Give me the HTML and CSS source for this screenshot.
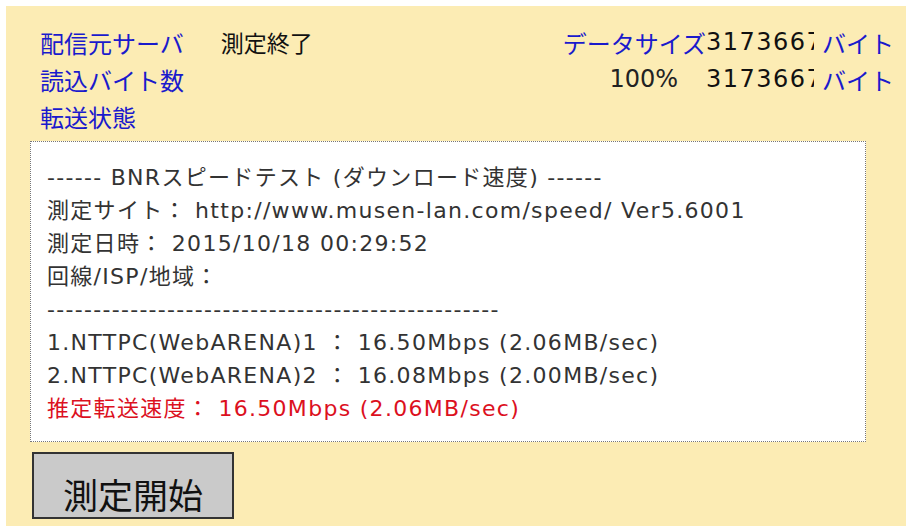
FILE: index.html
```html
<!DOCTYPE html>
<html lang="ja">
<head>
    <meta charset="UTF-8" />
    <meta name="viewport" content="width=device-width, initial-scale=1.0"/>
    <title>BNRスピードテスト</title>
    <link rel="stylesheet" href="styles.css">
</head>
<body>
    <div class="panel">
        <div class="info">
            <div class="info-row">
                <span class="label">配信元サーバ</span>
                <span class="status">測定終了</span>
                <div class="size">
                    <span class="label">データサイズ</span>
                    <span class="num">3173667</span>
                    <span class="label unit">バイト</span>
                </div>
            </div>
            <div class="info-row">
                <span class="label">読込バイト数</span>
                <div class="size">
                    <span class="pct">100%</span>
                    <span class="num">3173667</span>
                    <span class="label unit">バイト</span>
                </div>
            </div>
            <div class="info-row">
                <span class="label">転送状態</span>
            </div>
        </div>

        <div class="result">
            <p>------ BNRスピードテスト (ダウンロード速度) ------</p>
            <p>測定サイト： http://www.musen-lan.com/speed/ Ver5.6001</p>
            <p>測定日時： 2015/10/18 00:29:52</p>
            <p>回線/ISP/地域：</p>
            <p>-------------------------------------------------</p>
            <p>1.NTTPC(WebARENA)1 ： 16.50Mbps (2.06MB/sec)</p>
            <p>2.NTTPC(WebARENA)2 ： 16.08Mbps (2.00MB/sec)</p>
            <p class="estimate">推定転送速度： 16.50Mbps (2.06MB/sec)</p>
        </div>

        <button type="button" class="start">測定開始</button>
    </div>
</body>
</html>
```

FILE: styles.css
```css
body {
    font-family: "Noto Sans CJK JP", "Noto Sans", sans-serif;
    margin: 6px;
    background: #ffffff;
}
.panel {
    height: 520px;
    box-sizing: border-box;
    padding: 18px 16px 0 24px;
    background: #fcecb4;
}
.info {
    padding-left: 10px;
    font-size: 24px;
}
.info-row {
    display: flex;
    align-items: center;
    height: 37px;
    line-height: 37px;
    white-space: nowrap;
}
.label {
    color: #1a1acc;
}
.status {
    margin-left: 37px;
    color: #111;
    font-size: 23px;
}
.size {
    display: flex;
    margin-left: auto;
}
.num {
    width: 108px;
    overflow: hidden;
    color: #111;
    font-family: "DejaVu Sans", sans-serif;
    font-size: 24px;
    letter-spacing: 1.5px;
}
.pct {
    padding-right: 28px;
    color: #222;
    font-family: "DejaVu Sans", sans-serif;
    font-size: 24px;
}
.unit {
    margin-left: 8px;
    width: 68px;
}
.result {
    margin: 6px 24px 0 0;
    padding: 19px 16px 16px;
    background: #ffffff;
    border: 1px dotted #777;
    font-family: "DejaVu Sans", "Noto Sans CJK JP", sans-serif;
    font-size: 22px;
    letter-spacing: 1.3px;
    line-height: 33px;
    color: #333;
}
.result p {
    margin: 0;
    white-space: nowrap;
}
.estimate {
    color: #dc101e;
}
.start {
    display: block;
    width: 202px;
    height: 67px;
    margin: 10px 0 0 2px;
    padding: 14px 0 0;
    background: #cacaca;
    border: 2px solid #333;
    font-family: "Noto Sans CJK JP", sans-serif;
    font-size: 35px;
    color: #111;
}
```
